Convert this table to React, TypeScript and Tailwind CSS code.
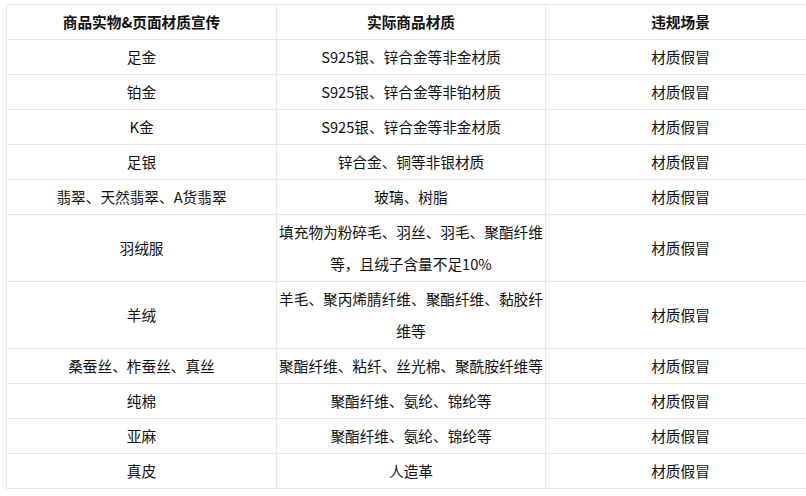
import React from 'react'

const rows: [string, string, string][] = [
  ['足金', 'S925银、锌合金等非金材质', '材质假冒'],
  ['铂金', 'S925银、锌合金等非铂材质', '材质假冒'],
  ['K金', 'S925银、锌合金等非金材质', '材质假冒'],
  ['足银', '锌合金、铜等非银材质', '材质假冒'],
  ['翡翠、天然翡翠、A货翡翠', '玻璃、树脂', '材质假冒'],
  ['羽绒服', '填充物为粉碎毛、羽丝、羽毛、聚酯纤维等，且绒子含量不足10%', '材质假冒'],
  ['羊绒', '羊毛、聚丙烯腈纤维、聚酯纤维、黏胶纤维等', '材质假冒'],
  ['桑蚕丝、柞蚕丝、真丝', '聚酯纤维、粘纤、丝光棉、聚酰胺纤维等', '材质假冒'],
  ['纯棉', '聚酯纤维、氨纶、锦纶等', '材质假冒'],
  ['亚麻', '聚酯纤维、氨纶、锦纶等', '材质假冒'],
  ['真皮', '人造革', '材质假冒'],
]

const cell = 'border border-[#e8e8e8] px-[2px] py-[1px] text-center align-middle leading-[32px]'

export default function App() {
  return (
    <div
      className="w-[806px] h-[496px] overflow-hidden bg-white text-[#111] text-[14.67px]"
      style={{ fontFamily: '"Microsoft YaHei", "Noto Sans CJK SC", sans-serif' }}
    >
      <div className="pt-[4px] pl-[6px]">
        <table className="table-fixed border-collapse w-[809px]">
          <colgroup>
            <col className="w-[270px]" />
            <col className="w-[269px]" />
            <col className="w-[270px]" />
          </colgroup>
          <thead>
            <tr>
              <th className={`${cell} font-bold`}>商品实物&amp;页面材质宣传</th>
              <th className={`${cell} font-bold`}>实际商品材质</th>
              <th className={`${cell} font-bold`}>违规场景</th>
            </tr>
          </thead>
          <tbody>
            {rows.map((r, i) => (
              <tr key={i}>
                <td className={cell}>{r[0]}</td>
                <td className={cell}>{r[1]}</td>
                <td className={cell}>{r[2]}</td>
              </tr>
            ))}
          </tbody>
        </table>
      </div>
    </div>
  )
}
